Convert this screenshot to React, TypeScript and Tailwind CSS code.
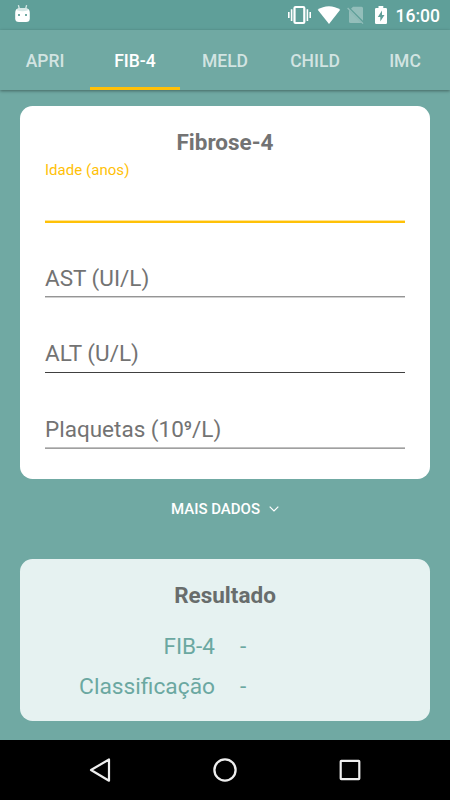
import React from "react";

const tabs = ["APRI", "FIB-4", "MELD", "CHILD", "IMC"];

function StatusBar() {
  return (
    <div className="flex h-[30px] items-center justify-between bg-[#5f9f99] pl-[15px] pr-[10px] text-white">
      <svg className="h-[30px] w-[15px]" viewBox="15 0 15 30" fill="none">
        <path d="M18.4 5.2L19.4 9M26.6 5.2L25.6 9" stroke="#fff" strokeOpacity=".75" strokeWidth="1.3" />
        <path d="M15.2 13Q15.2 8.6 19 8.6H26Q29.8 8.6 29.8 13V18.5Q29.8 22 26 22H19Q15.2 22 15.2 18.5Z" fill="#fff" />
        <path d="M16.8 10.2Q17.2 7.9 19.8 7.9H25.2Q27.8 7.9 28.2 10.2Q22.5 12.4 16.8 10.2Z" fill="#d6e8e6" />
        <path d="M18 14h2v2h-2zM25 14h2v2h-2z" fill="#72aaa4" />
      </svg>
      <div className="flex h-[30px] items-center">
        <svg className="h-[30px] w-[108px]" viewBox="288 0 108 30" fill="none">
          <rect x="294.5" y="7" width="9.8" height="16" rx="1" stroke="#fff" strokeWidth="2.2" />
          <path d="M291.6 9.3v11.6M307.4 9.3v11.6M288.8 12v6M310.2 12v6" stroke="#fff" strokeWidth="1.6" />
          <path d="M317.7 9.8C324 4.9 333.8 4.9 340.2 9.8L329 24Z" fill="#fff" />
          <path d="M353 6.7H361.5Q363 6.7 363 8.2V20.8L351 8.8Z" fill="#fff" fillOpacity=".33" />
          <path d="M349 10.6L361.4 23H350.5Q349 23 349 21.5Z" fill="#fff" fillOpacity=".33" />
          <path d="M347.6 8L363 23.6" stroke="#fff" strokeOpacity=".33" strokeWidth="1.3" />
          <path d="M378.5 6h4.8v2h2.5q1.2 0 1.2 1.2v13.5q0 1.2-1.2 1.2h-9.6q-1.2 0-1.2-1.2V9.2Q375 8 376.2 8h2.3z" fill="#fff" />
          <path d="M382 10.5L377.8 17H380.3V21.6L384.5 15.1H382Z" fill="#5f9f99" />
        </svg>
        <span className="pt-px text-[17.5px] leading-[30px] font-medium">16:00</span>
      </div>
    </div>
  );
}

function Tabs() {
  return (
    <nav className="relative z-10 grid h-[60px] grid-cols-5 grid-rows-[60px] bg-[#70a9a3] shadow-[0_1px_3px_rgba(0,0,0,0.4)]">
      {tabs.map((tab) => (
        <div
          key={tab}
          className={
            tab === "FIB-4"
              ? "h-[60px] border-b-[3px] border-[#ffc107] pt-px text-center text-[17.5px] leading-[60px] font-medium text-white"
              : "h-[60px] pt-px text-center text-[17.5px] leading-[60px] font-medium text-white/70"
          }
        >
          {tab}
        </div>
      ))}
    </nav>
  );
}

function Field({ label, box, line }: { label: string; box: string; line: string }) {
  return (
    <div className={box}>
      <span className="text-[22.5px] leading-[27px] text-[#737373]">{label}</span>
      <div className={line} />
    </div>
  );
}

export default function App() {
  return (
    <div className="flex h-[800px] w-[450px] flex-col overflow-hidden bg-[#70a9a3] font-[Roboto,sans-serif]">
      <StatusBar />
      <Tabs />
      <main className="flex-1 px-5 pt-[15.5px]">
        <section className="h-[373px] rounded-[12.5px] bg-white px-[25px] pt-[23px]">
          <h1 className="text-center text-[22.5px] leading-[27px] font-bold text-[#737373]">Fibrose-4</h1>
          <div className="pt-[5px] text-[15px] leading-[18px] tracking-[0.04px] text-[#ffc107]">Idade (anos)</div>
          <div className="mt-[41.5px] h-[3px] border-t border-[#ffe597] bg-[#ffc107]" />
          <Field
            label="AST (UI/L)"
            box="flex h-[75px] flex-col justify-end"
            line="mt-[4px] h-[2px] border-b border-[#d0d0d0] bg-[#959595]"
          />
          <Field label="ALT (U/L)" box="flex h-[75px] flex-col justify-end" line="mt-[5px] h-px bg-[#404040]" />
          <Field
            label="Plaquetas (10⁹/L)"
            box="flex h-[76px] flex-col justify-end"
            line="mt-[4px] h-[2px] border-b border-[#a0a0a0] bg-[#c0c0c0]"
          />
        </section>
        <div className="flex h-[80px] items-start justify-center pt-[20px] text-[15px] leading-[20px] font-medium text-white">
          <span>MAIS DADOS</span>
          <svg className="ml-[9px] h-[20px] w-[10px]" viewBox="0 0 10 20" fill="none">
            <path d="M.7 7.7L5 12L9.3 7.7" stroke="#fff" strokeWidth="1.2" />
          </svg>
        </div>
        <section className="h-[162px] rounded-[12.5px] bg-[#e6f2f1] pt-[23px]">
          <h2 className="text-center text-[22.5px] leading-[27px] font-bold text-[#686d6c]">Resultado</h2>
          <dl className="grid grid-cols-[195px_1fr] gap-x-[25px] pt-[17px] text-[22.5px] leading-[40.5px] text-[#6ba8a1]">
            <dt className="text-right">FIB-4</dt>
            <dd>-</dd>
            <dt className="text-right text-[22.75px] leading-[41.5px]">Classificação</dt>
            <dd>-</dd>
          </dl>
        </section>
      </main>
      <footer className="flex h-[60px] items-center justify-between bg-black px-[85px]">
        <svg className="h-[30px] w-[30px]" viewBox="85 755 30 30" fill="none">
          <path d="M91 770L109 759.5V780.7Z" stroke="#eee" strokeWidth="2.2" strokeLinejoin="round" />
        </svg>
        <svg className="h-[30px] w-[30px]" viewBox="210 755 30 30" fill="none">
          <circle cx="225" cy="770" r="10.6" stroke="#eee" strokeWidth="2.3" />
        </svg>
        <svg className="h-[30px] w-[30px]" viewBox="335 755 30 30" fill="none">
          <rect x="340.7" y="760.8" width="18.6" height="18.4" rx=".6" stroke="#eee" strokeWidth="2.2" />
        </svg>
      </footer>
    </div>
  );
}
